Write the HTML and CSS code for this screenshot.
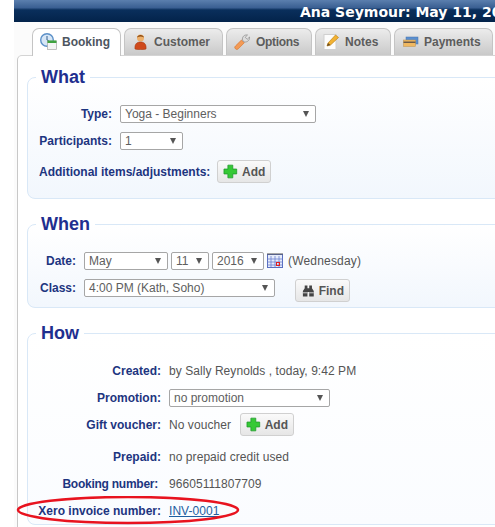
FILE: index.html
```html
<!DOCTYPE html>
<html lang="en">

<head>
    <meta charset="UTF-8">
    <title>Booking</title>
    <link rel="stylesheet" href="styles.css">
</head>

<body>
    <div class="window">
        <div class="titlebar">Ana Seymour: May 11, 2016</div>

        <div class="tabs">
            <div class="tab active tab-booking">
                <svg class="tab-icon" viewBox="0 0 17 17">
                    <circle cx="7" cy="7" r="6.300" fill="#d6e6f6" stroke="#5b90c8" stroke-width="1.400"/>
                    <path d="M7 3v4l2 1" fill="none" stroke="#35608f" stroke-width="1"/>
                    <rect x="7.500" y="8" width="9" height="8.500" fill="#f4f4f4" stroke="#a8a8a8" stroke-width=".7"/>
                    <rect x="7.500" y="7.500" width="9" height="2.500" fill="#3fa23f"/>
                </svg>
                Booking
            </div>
            <div class="tab tab-customer">
                <svg class="tab-icon" viewBox="0 0 17 17">
                    <circle cx="8.500" cy="5" r="3.500" fill="#eeb06a"/>
                    <path d="M5 4.500c.5-3.500 6.500-3.500 7 0-2-1.200-5-1.200-7 0z" fill="#8a4a12"/>
                    <path d="M3 16c-.5-4.500 1.500-7 5.500-7s6 2.500 5.500 7c-2 .8-9 .8-11 0z" fill="#cf4a1c" stroke="#a63a12" stroke-width=".6"/>
                </svg>
                Customer
            </div>
            <div class="tab tab-options">
                <svg class="tab-icon" viewBox="0 0 17 17">
                    <path d="M1.500 15.800c-1.200-1.200-.8-2 .2-3L7.500 7l2.800 2.800-5.800 5.800c-1 1-2 1.200-3 .2z" fill="#f39a55" stroke="#d9752c" stroke-width=".7"/>
                    <path d="M8.500 7c-.5-3 1.500-5.500 5-5l-2.300 2.300 2 2L15.500 4c.5 3.500-2.500 5.500-5.500 5z" fill="#dcdcdc" stroke="#8a8a8a" stroke-width=".7"/>
                </svg>
                Options
            </div>
            <div class="tab tab-notes">
                <svg class="tab-icon" viewBox="0 0 17 17">
                    <rect x="1" y="1.500" width="12" height="15" fill="#fcfcfc" stroke="#d0d0d0"/>
                    <path d="M4 13l1-3 7.500-8L15.500 4.500l-8 7.500z" fill="#f2b232" stroke="#c08418" stroke-width=".7"/>
                    <path d="M4 13l1-3 2.500 2z" fill="#6a4c24"/>
                </svg>
                Notes
            </div>
            <div class="tab tab-payments">
                <svg class="tab-icon" viewBox="0 0 17 17">
                    <rect x="4" y="4" width="12" height="7" fill="#5a8fd0" stroke="#4a76aa" stroke-width=".5"/>
                    <rect x="1.500" y="7" width="12" height="6.500" fill="#f0b860" stroke="#b89050" stroke-width=".5"/>
                    <rect x="1.500" y="8.500" width="12" height="1.500" fill="#6a5a4a"/>
                </svg>
                Payments
            </div>
        </div>

        <div class="panel">
            <fieldset class="group what">
                <legend>What</legend>
                <div class="row">
                    <label class="field-label">Type:</label>
                    <div class="select w-196"><span>Yoga - Beginners</span></div>
                </div>
                <div class="row">
                    <label class="field-label">Participants:</label>
                    <div class="select w-63"><span>1</span></div>
                </div>
                <div class="row row-extra">
                    <label class="field-label wide">Additional items/adjustments:</label>
                    <button class="btn" type="button">
                        <svg class="plus" viewBox="0 0 15 15"><path d="M5 1h5v4h4v5h-4v4H5v-4H1V5h4z" fill="#35c935" stroke="#1f9a2a" stroke-width=".8"/></svg>
                        Add
                    </button>
                </div>
            </fieldset>

            <fieldset class="group when">
                <legend>When</legend>
                <div class="row">
                    <label class="field-label">Date:</label>
                    <div class="select w-84"><span>May</span></div>
                    <div class="select w-38"><span>11</span></div>
                    <div class="select w-52"><span>2016</span></div>
                    <svg class="calendar" viewBox="0 0 16 15">
                        <rect x=".5" y="1.500" width="15" height="13" fill="#e6ecfa" stroke="#5a6fc0"/>
                        <path d="M.5 1h15" stroke="#555" stroke-width="2" stroke-dasharray="1 1"/>
                        <path d="M.5 6h15M.5 9h15M.5 12h15M4 3v11M8 3v11M12 3v11" stroke="#6a80d0" stroke-width=".8"/>
                        <rect x="9.500" y="9.500" width="3" height="3" fill="none" stroke="#e02020"/>
                    </svg>
                    <span class="value day">(Wednesday)</span>
                </div>
                <div class="row">
                    <label class="field-label">Class:</label>
                    <div class="select w-191"><span>4:00 PM (Kath, Soho)</span></div>
                    <button class="btn find" type="button">
                        <svg class="binoculars" viewBox="0 0 14 14">
                            <path d="M3 1h3v3h2V1h3v3l2 3v6H8V8H6v5H1V7l2-3z" fill="#444"/>
                            <path d="M1 9h5M8 9h5" stroke="#ddd"/>
                        </svg>
                        Find
                    </button>
                </div>
            </fieldset>

            <fieldset class="group how">
                <legend>How</legend>
                <div class="row">
                    <label class="field-label">Created:</label>
                    <span class="value">by Sally Reynolds , today, 9:42 PM</span>
                </div>
                <div class="row">
                    <label class="field-label">Promotion:</label>
                    <div class="select w-161"><span>no promotion</span></div>
                </div>
                <div class="row row-voucher">
                    <label class="field-label">Gift voucher:</label>
                    <span class="value">No voucher</span>
                    <button class="btn voucher-add" type="button">
                        <svg class="plus" viewBox="0 0 15 15"><path d="M5 1h5v4h4v5h-4v4H5v-4H1V5h4z" fill="#35c935" stroke="#1f9a2a" stroke-width=".8"/></svg>
                        Add
                    </button>
                </div>
                <div class="row">
                    <label class="field-label">Prepaid:</label>
                    <span class="value">no prepaid credit used</span>
                </div>
                <div class="row">
                    <label class="field-label shifted">Booking number:</label>
                    <span class="value">96605111807709</span>
                </div>
                <div class="row">
                    <label class="field-label">Xero invoice number:</label>
                    <a class="value invoice" href="#">INV-0001</a>
                </div>
            </fieldset>
        </div>
    </div>

    <!-- red marker drawn over the screenshot -->
    <svg class="marker" viewBox="0 0 226 30">
        <ellipse cx="112" cy="14" rx="110" ry="13" fill="none" stroke="#e8131f" stroke-width="2.500"/>
    </svg>
</body>

</html>
```

FILE: styles.css
```css
html, body {
    margin: 0;
    height: 100%;
    background-color: #fff;
    overflow: hidden;
}

body {
    font-family: "Liberation Sans", Arial, sans-serif;
    font-size: 12px;
    position: relative;
}

.window {
    margin-left: 14px;
    height: 527px;
    background-color: #fbfbfb;
    overflow: hidden;
}

.titlebar {
    height: 22px;
    background: linear-gradient(to bottom, #5b7fae 0, #3a5f92 35%, #0a2f5c 45%, #03234a 100%);
    color: #fff;
    font-family: "DejaVu Sans", sans-serif;
    font-weight: bold;
    font-size: 14px;
    line-height: 24px;
    white-space: nowrap;
    padding-left: 286px;
    overflow: hidden;
}

.tabs {
    display: flex;
    gap: 3px;
    height: 27px;
    margin-top: 6px;
    padding-left: 18px;
    white-space: nowrap;
}

.tab {
    display: flex;
    align-items: center;
    gap: 5px;
    box-sizing: border-box;
    height: 27px;
    padding: 0 0 1px 7px;
    border: 1px solid #c4c4c4;
    border-bottom: none;
    border-radius: 7px 7px 0 0;
    background: linear-gradient(to bottom, #ececec, #c9c9c9);
    color: #5c5c5c;
    font-weight: bold;
}

.tab.active {
    background: #fff;
    color: #4d5560;
    position: relative;
    z-index: 1;
    height: 28px;
    padding-bottom: 2px;
}

.tab-booking { width: 89px; }
.tab-customer { width: 99px; }
.tab-options { width: 86px; letter-spacing: -.3px; }
.tab-notes { width: 76px; }
.tab-payments { width: 99px; }

.tab-icon {
    width: 17px;
    height: 17px;
    flex-shrink: 0;
}

.panel {
    margin-left: 3px;
    margin-right: -30px;
    height: 472px;
    box-sizing: border-box;
    border-left: 1px solid #c8c8c8;
    border-top: 1px solid #d4d4d4;
    border-radius: 5px 0 0 0;
    background-color: #fff;
    padding: 11px 0 0 9px;
}

.group {
    box-sizing: border-box;
    margin: 0 0 15px 0;
    padding: 0 0 0 11px;
    border: 1px solid #d9e8f7;
    border-radius: 8px;
    background: linear-gradient(to bottom, #fff 0, #f2f7fd 100%);
    min-width: 0;
}

.group legend {
    margin-left: -3px;
    padding: 0 5px;
    color: #1f2f8f;
    font-size: 18px;
    font-weight: bold;
    line-height: 20px;
}

.what { height: 132px; }
.when { height: 94px; }
.how {
    height: 202px;
    background: linear-gradient(to bottom, #fff 0, #fafcff 100%);
}

.row {
    display: flex;
    align-items: center;
    height: 27px;
}

.what .row:first-of-type,
.when .row:first-of-type {
    margin-top: 13px;
}

.how .row:first-of-type {
    margin-top: 14px;
}

.field-label {
    display: flex;
    justify-content: flex-end;
    color: #1d3580;
    font-weight: bold;
    white-space: nowrap;
    flex-shrink: 0;
    margin-right: 8px;
}

.what .field-label { width: 73px; }
.what .field-label.wide { width: auto; margin-right: 7px; }
.when .field-label { width: 37px; }
.how .field-label { width: 122px; }
.how .field-label.shifted {
    width: 119px;
    padding-right: 3px;
    letter-spacing: -.25px;
}

.row-extra {
    height: 33px;
    margin-top: 1px;
}

.row-voucher {
    margin-bottom: 5px;
}

.select {
    position: relative;
    box-sizing: border-box;
    height: 18px;
    line-height: 16px;
    padding-left: 4px;
    margin-right: 3px;
    border: 1px solid #a6a6a6;
    border-radius: 2px;
    background-color: #fff;
    color: #5e5e5e;
    white-space: nowrap;
}

.select::after {
    content: "";
    position: absolute;
    right: 6px;
    top: 5px;
    border-left: 3px solid transparent;
    border-right: 3px solid transparent;
    border-top: 6px solid #555;
}

.w-196 { width: 196px; }
.w-63 { width: 63px; }
.w-84 { width: 84px; }
.w-38 { width: 38px; }
.w-52 { width: 52px; }
.w-191 { width: 191px; }
.w-161 { width: 161px; }

.value {
    color: #555;
    white-space: nowrap;
    letter-spacing: .06px;
}

.day {
    margin-left: 5px;
    letter-spacing: .18px;
}

.calendar {
    width: 16px;
    height: 15px;
}

.invoice {
    color: #1f5fa0;
    text-decoration: underline;
}

.btn {
    display: flex;
    align-items: center;
    gap: 4px;
    box-sizing: border-box;
    width: 54px;
    height: 23px;
    padding: 0 5px;
    border: 1px solid #d0d0d0;
    border-radius: 3px;
    background: linear-gradient(to bottom, #fafafa, #e6e6e6);
    color: #555;
    font-family: inherit;
    font-size: 12px;
    font-weight: bold;
}

.find {
    width: 55px;
    margin: 6px 0 0 17px;
    padding-left: 6px;
}

.voucher-add {
    margin-left: 9px;
}

.plus {
    width: 15px;
    height: 15px;
}

.binoculars {
    width: 14px;
    height: 14px;
}

.marker {
    position: absolute;
    left: 16px;
    top: 496px;
    width: 226px;
    height: 30px;
}
```
